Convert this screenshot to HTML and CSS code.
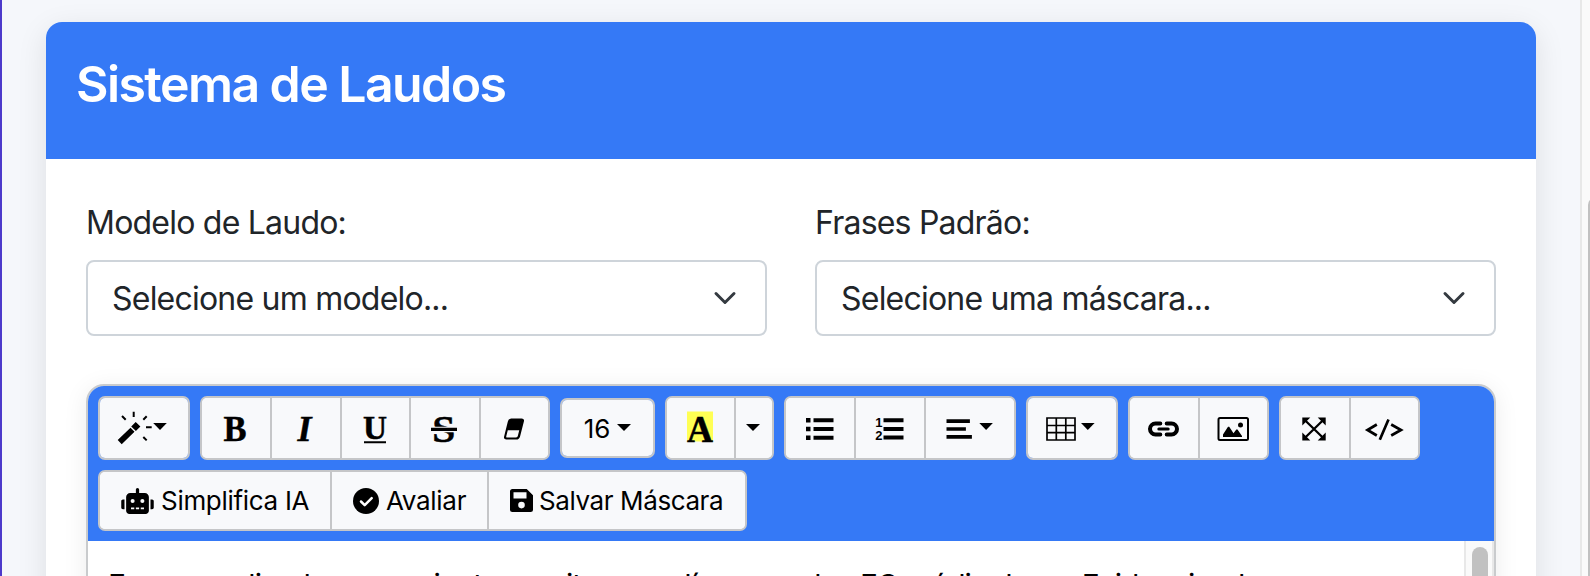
FILE: index.html
```html
<!DOCTYPE html>
<html lang="pt-BR">
<head>
<meta charset="utf-8">
<title>Sistema de Laudos</title>
<link rel="stylesheet" href="styles.css">
</head>
<body>
<div class="page">
  <main class="card">
    <header class="card-header"><h1>Sistema de Laudos</h1></header>
    <div class="card-body">
      <div class="fields">
        <div class="field">
          <span class="label">Modelo de Laudo:</span>
          <div class="select"><span>Selecione um modelo...</span>
            <svg class="chevron" viewBox="0 0 16 16"><path d="m2 5 6 6 6-6"/></svg></div>
        </div>
        <div class="field">
          <span class="label">Frases Padrão:</span>
          <div class="select"><span>Selecione uma máscara...</span>
            <svg class="chevron" viewBox="0 0 16 16"><path d="m2 5 6 6 6-6"/></svg></div>
        </div>
      </div>
      <section class="editor">
        <div class="toolbar">
          <div class="row icons">
            <div class="group"><button class="btn w-magic"><svg width="52" height="36" viewBox="-1 0 52 36"><path d="M-.300 29 12.500 16.700l4 4L3.700 33.300zM13.200 15.400l4.500-4.500 4.700 4.700-4.500 4.500z"/><path class="line" d="M15.700.700V6M4 5l3.700 3.700M28.700 5.300l-3.400 3.400M28 16.300h5.700M25.300 26l3.400 3.400"/><path d="M35.200 12h13.600L42 19z"/></svg></button></div>
            <div class="group">
              <button class="btn w68"><svg width="24" height="25" viewBox="0 0 24 25"><text class="serif bold" x="0.500" y="24.200" font-size="35.500" textLength="23" lengthAdjust="spacingAndGlyphs">B</text></svg></button>
              <button class="btn w70"><svg width="18" height="25" viewBox="0 0 18 25"><text class="serif bold italic" x="1.500" y="24.200" font-size="35.500" textLength="14" lengthAdjust="spacingAndGlyphs">I</text></svg></button>
              <button class="btn w69"><svg width="24" height="27" viewBox="0 0 24 27"><text class="serif bold" x="0" y="23" font-size="34" textLength="24" lengthAdjust="spacingAndGlyphs">U</text><path d="M1 25.200h22v2H1z"/></svg></button>
              <button class="btn w70"><svg width="26" height="27" viewBox="0 0 26 27"><text class="serif bold" x="1.200" y="26" font-size="37.500" textLength="23" lengthAdjust="spacingAndGlyphs">S</text><path class="face" d="M1 10.800h24v5.400H1z"/><path d="M0 11.700h26v3.300H0z"/></svg></button>
              <button class="btn w69"><svg width="22" height="22" viewBox="0 0 22 23"><path fill-rule="evenodd" d="M8 .500h11q3 0 2.400 3l-4 15.500q-1 3.500-4 3.500H3q-3 0-2.400-3L4.500 4Q5.200.500 8 .500zM4.500 12.700l-1.600 6.300q-.300 1.500 1 1.500h8.800q1.700 0 2.200-1.500l1.600-6.300z"/></svg></button>
            </div>
            <div class="group short"><button class="btn w-size"><span>16</span><i class="caret"></i></button></div>
            <div class="group">
              <button class="btn w67"><svg width="26" height="36" viewBox="0 -.500 26 36"><path class="yellow" d="M0 0h26v30H0z"/><text class="serif bold" x="0" y="30" font-size="37" textLength="26" lengthAdjust="spacingAndGlyphs">A</text></svg></button>
              <button class="btn w-drop"><i class="caret"></i></button>
            </div>
            <div class="group">
              <button class="btn w68"><svg width="28" height="22" viewBox="-.500 0 28 22"><path d="M.500 0H5v4.500H.500zM.500 8.700H5v4.500H.500zM.500 17.400H5v4.500H.500zM8 .300h20v4H8zM8 9h20v4H8zM8 17.700h20v4H8z"/></svg></button>
              <button class="btn w70"><svg width="28" height="24" viewBox="-.500 0 28 24"><text class="sans bold" x="-.300" y="9.700" font-size="13">1</text><text class="sans bold" x="-.300" y="23" font-size="13">2</text><path d="M8 1.200h20v4H8zM8 9.900h20v4H8zM8 18.600h20v4H8z"/></svg></button>
              <button class="btn w-align"><svg width="47" height="22" viewBox="-.500 0 47 22"><path d="M0 1.300h23.400v3.700H0zM0 9.300h19.400v3.500H0zM0 17h25.400v3.700H0zM32.800 5h13.600l-6.800 7z"/></svg></button>
            </div>
            <div class="group"><button class="btn w-table"><svg width="49" height="24" viewBox="1 0 49 24"><path class="grid" d="M1 1h28v22H1zM10.300 1v22M19.800 1v22M1 8.500h28M1 15.700h28"/><path d="M35 6h13.600l-6.800 7z"/></svg></button></div>
            <div class="group">
              <button class="btn w68"><svg width="31" height="18" viewBox="0 0 31 18"><path class="link" d="M12.300 3.500H7.500a5.500 5.500 0 0 0 0 11h4.800M18.700 3.500h4.800a5.500 5.500 0 0 1 0 11h-4.800"/><path class="link-bar" d="M10.800 9h9.400"/></svg></button>
              <button class="btn w69"><svg width="32" height="24" viewBox="0 0 32 24"><rect class="thin" x="1.500" y="1" width="29.500" height="22" rx="1.500"/><path d="M6 20v-2.500l5-7.800h1.200l4.300 6.500 2.800-3.700h1.200L25 19v1z"/><circle cx="23.500" cy="8" r="2.500"/></svg></button>
            </div>
            <div class="group">
              <button class="btn w68"><svg width="24" height="24" viewBox="0 0 24 24"><path d="M.300.500h8l-8 8zM23.700.500h-8l8 8zM.300 23.500h8l-8-8zM23.700 23.500h-8l8-8z"/><path class="cross" d="m3 3.200 18 17.600M21 3.200 3 20.800"/></svg></button>
              <button class="btn w69"><svg width="38" height="22" viewBox="0 0 38 22"><path class="code" d="M11.800 6.500 2.500 12l9.300 5.500M26.200 6.500l9.800 5.500-9.800 5.500M23.500 1.500 14.800 21.800"/></svg></button>
            </div>
          </div>
          <div class="row">
            <div class="group text">
              <button class="btn lead w-ai"><svg width="33" height="26" viewBox="0 0 640 512"><path fill-rule="evenodd" d="M32 224h32v192H32c-18 0-32-14-32-32V256c0-18 14-32 32-32zm512-48v272c0 35-29 64-64 64H160c-35 0-64-29-64-64V176c0-44 36-80 80-80h112V32c0-18 14-32 32-32s32 14 32 32v64h112c44 0 80 36 80 80zM264 256a40 40 0 1 0-80 0 40 40 0 0 0 80 0zm-8 128h-64v32h64zm96 0h-64v32h64zm104-128a40 40 0 1 0-80 0 40 40 0 0 0 80 0zm-8 128h-64v32h64zm192-128v128c0 18-14 32-32 32h-32V224h32c18 0 32 14 32 32z"/></svg><span>Simplifica IA</span></button>
              <button class="btn lead w-check"><svg width="26" height="26" viewBox="0 0 26 26"><circle cx="13" cy="13" r="13"/><path class="tick" d="m8 13.500 3.700 3.700 7-7"/></svg><span>Avaliar</span></button>
              <button class="btn lead w-save"><svg width="23" height="23" viewBox="0 0 23 23"><path fill-rule="evenodd" d="M2.500 0h14.200l6.300 6.300v14.200a2.500 2.500 0 0 1-2.500 2.500h-18A2.500 2.500 0 0 1 0 20.500v-18A2.500 2.500 0 0 1 2.500 0zM3.500 3.300v6.200h13V3.300zM11.500 12.800a3.300 3.300 0 1 0 0 6.600 3.300 3.300 0 0 0 0-6.600z"/></svg><span>Salvar Máscara</span></button>
            </div>
          </div>
        </div>
        <div class="content"><p>Exame realizado em paciente em ritmo cardíaco regular, FC média de xx. Evidenciando</p><div class="scroll"><div class="thumb"></div></div></div>
      </section>
    </div>
  </main>
  <div class="page-scroll"><div class="page-thumb"></div></div>
</div>
</body>
</html>
```
FILE: styles.css
```css
* { box-sizing: border-box; }
body { margin: 0; height: 576px; overflow: hidden; font-family: Inter, "Liberation Sans", sans-serif; }
.page { height: 576px; padding: 22px 0 0 44px; display: flex; background: #f5f7fb; border-left: 2px solid #4d3acb; overflow: hidden; }
.card { width: 1490px; height: 900px; flex: none; border-radius: 16px 16px 0 0; background: #fff; box-shadow: 0 8px 30px rgba(0,0,0,.1); }
.card-header { height: 137px; padding: 33px 30px 0; background: #3579f6; border-radius: 16px 16px 0 0; color: #fff; }
h1 { margin: 0; font-size: 50px; line-height: 58px; font-weight: 600; letter-spacing: -1.57px; white-space: nowrap; }
.card-body { padding: 44px 40px 0; }
.fields { display: grid; grid-template-columns: 681px 681px; gap: 48px; }
.field { display: flex; flex-direction: column; }
.label { height: 57px; line-height: 39px; font-size: 32px; color: #212529; white-space: nowrap; letter-spacing: -.78px; }
.select { height: 76px; padding: 0 28px 0 24px; display: flex; align-items: center; justify-content: space-between; border: 2px solid #ced4da; border-radius: 8px; color: #212529; font-size: 32px; letter-spacing: -.78px; white-space: nowrap; }
.chevron { width: 24px; height: 24px; fill: none; stroke: #343a40; stroke-width: 2; stroke-linecap: round; stroke-linejoin: round; }
.editor { margin-top: 48px; height: 600px; border: 2px solid #c9cbcd; border-radius: 18px; box-shadow: 0 4px 24px rgba(0,0,0,.08); overflow: hidden; background: #fff; }
.toolbar { height: 155px; padding: 10px; display: flex; flex-direction: column; gap: 10px; background: #3579f6; }
.row { display: flex; gap: 10px; align-items: flex-start; }
.group { height: 64px; display: flex; border: 2px solid #c5c6c8; border-radius: 7px; background: #f8f9fb; overflow: hidden; }
.short { height: 60px; margin-top: 2px; }
.text { height: 61px; }
.btn { height: 100%; padding: 0; border: 0; display: flex; align-items: center; justify-content: center; background: #f8f9fb; color: #000; font: 26px Inter, "Liberation Sans", sans-serif; white-space: nowrap; }
.btn + .btn { border-left: 2px solid #c5c6c8; }
.btn svg { flex: none; overflow: visible; }
.icons .btn svg { margin: 2px 2px 0 0; }
.w67 { width: 67px; }
.w68 { width: 68px; }
.w69 { width: 69px; }
.w70 { width: 70px; }
.w-magic { width: 88px; }
.w-size { width: 91px; gap: 7px; letter-spacing: 0; }
.w-drop { width: 38px; }
.w-drop .caret { margin-right: 2px; }
.w-align { width: 90px; }
.w-table { width: 88px; }
.lead { justify-content: flex-start; padding-left: 21px; letter-spacing: -.3px; }
.w-ai { width: 230px; gap: 7px; }
.w-check { width: 157px; gap: 7px; }
.w-save { width: 258px; gap: 6px; letter-spacing: -.4px; }
.caret { width: 0; height: 0; margin-top: -2px; border: 7px solid transparent; border-top-color: #000; border-bottom: 0; }
.serif { font-family: "Liberation Serif", serif; stroke: #000; stroke-width: .5px; }
.sans { font-family: "Liberation Sans", sans-serif; }
.bold { font-weight: 700; }
.italic { font-style: italic; }
.face { fill: #f8f9fb; }
.yellow { fill: #ffff54; }
.line, .thin, .grid, .link, .link-bar, .cross, .code, .tick { fill: none; stroke: #000; stroke-width: 2; }
.grid { stroke-width: 1.7; }
.link { stroke-width: 4; stroke-linecap: round; }
.link-bar { stroke-width: 3; stroke-linecap: round; }
.cross { stroke-width: 2.3; }
.code { stroke-width: 2.7; }
.tick { stroke: #fff; stroke-width: 2.5; stroke-linecap: round; stroke-linejoin: round; }
.content { height: 440px; display: flex; justify-content: space-between; }
.content p { margin: 26px 0 0 20px; font-size: 30px; line-height: 37px; letter-spacing: -.95px; white-space: nowrap; }
.scroll { width: 30px; padding: 6px 0 0 6px; border-left: 2px solid #e8e8e8; border-right: 2px solid #e8e8e8; background: #fafafa; }
.thumb { width: 16px; height: 200px; border-radius: 8px; background: #c1c1c1; }
.page-scroll { width: 10px; height: 576px; margin: -22px 0 0 44px; padding: 197px 0 0 6px; border-left: 2px solid #e8e8e8; background: #fafafa; flex: none; }
.page-thumb { width: 16px; height: 400px; border-radius: 8px; background: #c1c1c1; }
```
